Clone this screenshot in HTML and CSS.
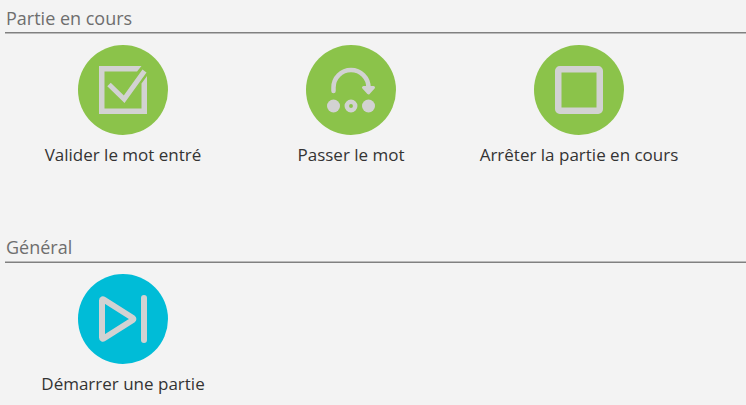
FILE: index.html
```html
<!DOCTYPE html>
<html lang="fr">
<head>
<meta charset="utf-8">
<meta name="viewport" content="width=device-width, initial-scale=1">
<title>Partie</title>
<link rel="stylesheet" href="styles.css">
</head>
<body>
<main class="panel">
  <section class="group">
    <h2 class="group-title">Partie en cours</h2>
    <div class="actions">
      <button class="action" type="button">
        <span class="disc">
          <svg class="icon" viewBox="0 0 48 48" aria-hidden="true">
            <path class="solid" d="M0 0H42.5L38 5.5H5.5V42.500H42.500V17.500L48 10V48H0Z"/>
            <path class="line" stroke-width="5" d="M10 18.500L25.200 33.200L45.500 5"/>
          </svg>
        </span>
        <span class="label">Valider le mot entré</span>
      </button>
      <button class="action" type="button">
        <span class="disc">
          <svg class="icon" viewBox="0 0 48 48" aria-hidden="true">
            <path class="line round" stroke-width="4.500" d="M6.500 25V21.500A17.500 17.500 0 0 1 41.500 21.500V24"/>
            <path class="solid edge" d="M36.500 21.500H46.500L41.500 27Z"/>
            <circle class="solid" cx="6.500" cy="40" r="6.500"/>
            <circle class="line" stroke-width="4.500" cx="24" cy="40" r="4.200"/>
            <circle class="solid" cx="41.500" cy="40" r="6.500"/>
          </svg>
        </span>
        <span class="label">Passer le mot</span>
      </button>
      <button class="action" type="button">
        <span class="disc">
          <svg class="icon" viewBox="0 0 48 48" aria-hidden="true">
            <rect class="line" stroke-width="6.500" x="3.250" y="3.250" width="41.500" height="41.500" rx="1.500"/>
          </svg>
        </span>
        <span class="label">Arrêter la partie en cours</span>
      </button>
    </div>
  </section>
  <section class="group group-general">
    <h2 class="group-title">Général</h2>
    <div class="actions">
      <button class="action" type="button">
        <span class="disc">
          <svg class="icon" viewBox="0 0 48 48" aria-hidden="true">
            <path class="line round" stroke-width="6" d="M3 5.500Q3 3.500 5 4.800L33.800 23Q35 24 33.800 25L5 43.200Q3 44.500 3 42.500Z"/>
            <path class="line round" stroke-width="6" d="M45 3V45"/>
          </svg>
        </span>
        <span class="label">Démarrer une partie</span>
      </button>
    </div>
  </section>
</main>
</body>
</html>
```
FILE: styles.css
```css
* {
  box-sizing: border-box;
}

body {
  margin: 0;
  background: #f3f3f3;
  color: #333;
  font-family: "Segoe UI", "Open Sans", "Noto Sans", sans-serif;
}

.panel {
  padding: 5px 0 0 5px;
}

.group {
  --disc: #8bc34a;
  --rule-top: #808080;
  --rule-bottom: #bababa;
  padding-bottom: 67px;
}

.group-general {
  --disc: #00bcd7;
  --rule-top: #bababa;
  --rule-bottom: #808080;
  padding-bottom: 0;
}

.group-title {
  margin: 0;
  padding: 0 1px 1px;
  border-bottom: 1px solid var(--rule-top);
  box-shadow: 0 1px 0 var(--rule-bottom);
  color: #6e6e6e;
  font-size: 18px;
  font-weight: 400;
  line-height: 26px;
}

.actions {
  display: grid;
  grid-template-columns: repeat(auto-fill, 228px);
  padding: 12px 0 0 4px;
}

.action {
  display: flex;
  flex-direction: column;
  align-items: center;
  gap: 8px;
  margin: 0;
  padding: 0;
  border: 0;
  background: none;
  color: inherit;
  font: inherit;
  cursor: pointer;
}

.disc {
  display: grid;
  place-items: center;
  width: 90px;
  height: 90px;
  border-radius: 50%;
  background: var(--disc);
}

.icon {
  width: 48px;
  height: 48px;
}

.solid {
  fill: #d2d2d2;
}

.line {
  fill: none;
  stroke: #d2d2d2;
}

.round {
  stroke-linecap: round;
  stroke-linejoin: round;
}

.edge {
  stroke: #d2d2d2;
  stroke-width: 3;
  stroke-linejoin: round;
}

.label {
  font-size: 17px;
  line-height: 24px;
}
```
